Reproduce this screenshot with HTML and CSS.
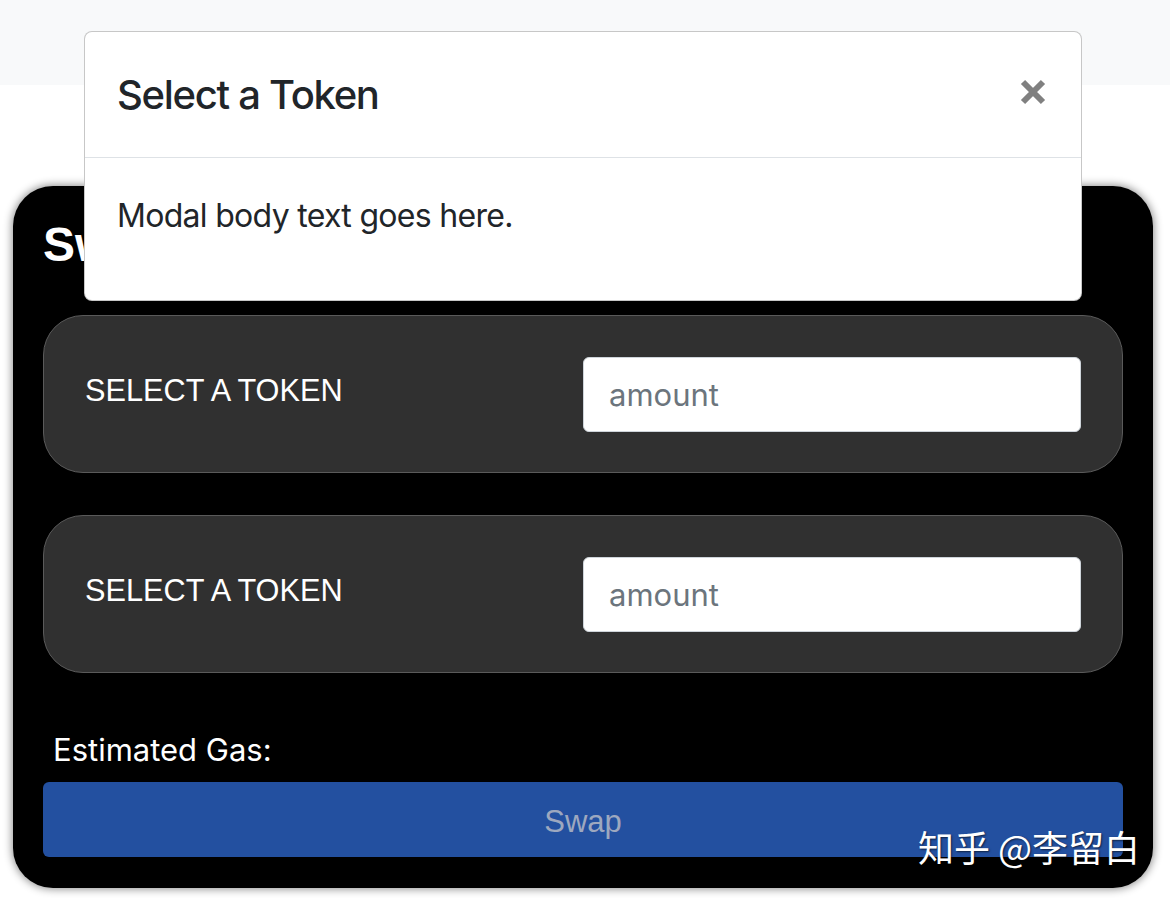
FILE: index.html
```html
<!DOCTYPE html>
<html lang="zh">
<head>
<meta charset="utf-8">
<title>Swap</title>
<link rel="stylesheet" href="styles.css">
</head>
<body>
<div class="topbar"></div>
<main class="page">
  <section class="swap-card">
    <h2 class="swap-title">Swap</h2>
    <div class="token-panel">
      <span class="token-select">SELECT A TOKEN</span>
      <input class="amount-input" type="text" placeholder="amount">
    </div>
    <div class="token-panel">
      <span class="token-select">SELECT A TOKEN</span>
      <input class="amount-input" type="text" placeholder="amount">
    </div>
    <div class="gas">Estimated Gas:</div>
    <button class="swap-btn" type="button">Swap</button>
  </section>
</main>

<div class="modal">
  <div class="modal-header">
    <h5 class="modal-title">Select a Token</h5>
    <button class="close-btn" type="button" aria-label="Close">
      <svg viewBox="0 0 26 26" width="26" height="26"><path d="M3 3 L23 23 M23 3 L3 23" stroke="#808080" stroke-width="6" stroke-linecap="butt" fill="none"/></svg>
    </button>
  </div>
  <div class="modal-body">Modal body text goes here.</div>
</div>

<div class="watermark">知乎 @李留白</div>
</body>
</html>
```

FILE: styles.css
```css
* { box-sizing: border-box; }

body {
  margin: 0;
  background: #ffffff;
  font-family: Inter, "Noto Sans", sans-serif;
  color: #212529;
}

.topbar {
  height: 85px;
  background: #f8f9fa;
}

.page {
  padding: 101px 17px 10px 13px;
}

.swap-card {
  background: #000;
  border-radius: 40px;
  padding: 30px 30px 31px 30px;
  box-shadow: 0 0 8px 1px rgba(0, 0, 0, 0.45);
  color: #fff;
}

.swap-title {
  margin: 0 0 42px 0;
  font-family: "Liberation Sans", Arial, sans-serif;
  font-weight: 700;
  font-size: 48px;
  line-height: 57px;
}

.token-panel {
  height: 158px;
  background: #303030;
  border: 1px solid #5a5a5a;
  border-radius: 40px;
  display: flex;
  align-items: center;
  justify-content: space-between;
  padding: 0 41px 0 41px;
  margin-bottom: 42px;
}

.token-panel + .token-panel { margin-bottom: 54px; }

.token-select {
  font-family: "Liberation Sans", Arial, sans-serif;
  font-size: 30.7px;
  color: #fff;
  margin-top: -6px;
}

.amount-input {
  width: 498px;
  height: 75px;
  border: 1px solid #ced4da;
  border-radius: 6px;
  padding: 0 25px;
  font-family: Inter, "Noto Sans", sans-serif;
  font-size: 31px;
  color: #495057;
  background: #fff;
  outline: none;
}

.amount-input::placeholder { color: #6c757d; }

.gas {
  font-size: 31px;
  line-height: 45px;
  padding-left: 10px;
  margin-bottom: 10px;
}

.swap-btn {
  display: block;
  width: 100%;
  height: 75px;
  background: #2350a0;
  border: none;
  border-radius: 6px;
  color: #9da8bf;
  font-family: "Liberation Sans", Arial, sans-serif;
  font-size: 31px;
  padding: 4px 0 0 0;
}

.modal {
  position: absolute;
  top: 31px;
  left: 84px;
  width: 998px;
  background: #fff;
  border: 1px solid rgba(0, 0, 0, 0.22);
  border-radius: 8px;
}

.modal-header {
  display: flex;
  align-items: center;
  justify-content: space-between;
  padding: 32px 35px 32px 32px;
  border-bottom: 1px solid #dee2e6;
}

.modal-title {
  margin: 0;
  font-size: 40px;
  font-weight: 500;
  line-height: 60px;
  letter-spacing: -1.3px;
  color: #212529;
  padding-top: 1px;
}

.close-btn {
  background: none;
  border: none;
  padding: 0;
  width: 26px;
  height: 26px;
  display: flex;
  margin-top: -6px;
}

.modal-body {
  padding: 34px 32px 60px 32px;
  font-size: 32px;
  line-height: 48px;
  letter-spacing: -0.7px;
  color: #212529;
}

.watermark {
  position: absolute;
  left: 918px;
  top: 823px;
  font-family: "Noto Sans CJK SC", sans-serif;
  font-size: 36px;
  line-height: 46px;
  color: #fff;
  text-shadow: 1px 1px 2px rgba(0, 0, 0, 0.6);
}
```
